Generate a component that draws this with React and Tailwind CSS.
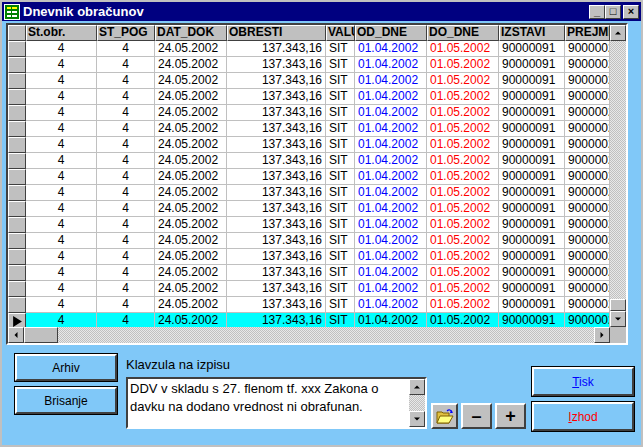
const cols = [
  { t: "Št.obr.", w: 71, a: "text-center" },
  { t: "ST_POG", w: 58, a: "text-center" },
  { t: "DAT_DOK", w: 72, a: "text-left" },
  { t: "OBRESTI", w: 99, a: "text-right" },
  { t: "VALU", w: 29, a: "text-left" },
  { t: "OD_DNE", w: 72, a: "text-left" },
  { t: "DO_DNE", w: 72, a: "text-left" },
  { t: "IZSTAVI", w: 66, a: "text-left" },
  { t: "PREJME", w: 45, a: "text-left" },
];
const vals = ["4", "4", "24.05.2002", "137.343,16", "SIT", "01.04.2002", "01.05.2002", "90000091", "9000002"];
const rows = Array.from({ length: 18 });

const raised = "border-t-white border-l-white border-r-[#404040] border-b-[#404040] border-2";

const Arrow = ({ d }) => {
  const pts = { up: "1,6 5,2 9,6", down: "1,2 5,6 9,2", left: "6,1 2,5 6,9", right: "2,1 6,5 2,9" }[d];
  const vb = d === "up" || d === "down" ? "0 0 10 8" : "0 0 8 10";
  return (
    <svg viewBox={vb} className={d === "up" || d === "down" ? "w-[8px] h-[6px]" : "w-[6px] h-[8px]"}>
      <polygon points={pts} fill="black" />
    </svg>
  );
};

const SBtn = ({ d }) => (
  <div className={`w-[16px] h-[16px] bg-[#c0c0c0] ${raised} border-[1px] flex items-center justify-center`}>
    <Arrow d={d} />
  </div>
);

const checker = "bg-[repeating-conic-gradient(#c0c0c0_0%_25%,#e8e8e8_0%_50%)] bg-[length:2px_2px]";

const Btn = ({ children, className }) => (
  <div className={`border border-black ${className}`}>
    <div className={`w-full h-full bg-[#80c8f8] ${raised} flex items-center justify-center text-[12px]`}>{children}</div>
  </div>
);

export default function App() {
  return (
    <div className="w-[643px] h-[447px] bg-[#c0c0c0] p-[2px] font-[Liberation_Sans,Arial,sans-serif] text-[12px] text-black overflow-hidden">
      <div className="w-full h-full bg-[#80c8f8] flex flex-col">
        <div className="h-[19px] bg-[#000080] flex items-center px-[2px] shrink-0">
          <svg viewBox="0 0 16 16" className="w-[16px] h-[16px]">
            <rect x="0" y="0" width="16" height="16" fill="#fff" />
            <rect x="1" y="1" width="14" height="14" fill="#008000" />
            <rect x="3" y="3" width="10" height="2" fill="#ffff00" />
            <rect x="3" y="7" width="10" height="2" fill="#fff" />
            <rect x="3" y="11" width="10" height="2" fill="#fff" />
            <rect x="7" y="3" width="1" height="10" fill="#008000" />
          </svg>
          <span className="text-white font-bold text-[13px] ml-[3px] flex-1">Dnevnik obračunov</span>
          {["_", "□", "×"].map((s, i) => (
            <div key={i} className={`w-[16px] h-[14px] bg-[#c0c0c0] ${raised} border-[1px] flex items-center justify-center text-[11px] font-bold leading-none ${i === 2 ? "ml-[2px]" : ""}`}>{s}</div>
          ))}
        </div>
        <div className="ml-[4px] mt-[2px] w-[622px] h-[322px] border-2 border-t-[#404040] border-l-[#404040] border-r-white border-b-white bg-[#c0c0c0] flex flex-col shrink-0">
          <div className="flex flex-1 overflow-hidden">
            <div className="flex-1 overflow-hidden">
              <div className="flex h-[16px] font-bold">
                <div className={`w-[20px] bg-[#c0c0c0] ${raised} border-[1px]`} />
                {cols.map((c, i) => (
                  <div key={i} style={{ width: c.w }} className={`bg-[#c0c0c0] ${raised} border-[1px] px-[1px] leading-[13px] whitespace-nowrap overflow-hidden shrink-0`}>{c.t}</div>
                ))}
              </div>
              {rows.map((_, r) => {
                const sel = r === 17;
                return (
                  <div key={r} className="flex h-[16px]">
                    <div className={`w-[20px] bg-[#c0c0c0] ${raised} border-[1px] flex items-center justify-center`}>
                      {sel && <svg viewBox="0 0 8 10" className="w-[9px] h-[11px]"><polygon points="0,0 8,5 0,10" fill="black" /></svg>}
                    </div>
                    {cols.map((c, i) => {
                      const color = sel ? "" : i === 5 ? "text-[#0000ff]" : i === 6 ? "text-[#ff0000]" : "";
                      return (
                        <div key={i} style={{ width: c.w }} className={`${sel ? "bg-[#00ffff]" : "bg-white"} border-r border-b border-[#c0c0c0] px-[3px] leading-[15px] whitespace-nowrap overflow-hidden shrink-0 ${c.a} ${color}`}>{vals[i]}</div>
                      );
                    })}
                  </div>
                );
              })}
            </div>
            <div className="w-[16px] flex flex-col shrink-0">
              <SBtn d="up" />
              <div className={`flex-1 ${checker} flex flex-col justify-end`}>
                <div className={`h-[12px] bg-[#c0c0c0] ${raised} border-[1px]`} />
              </div>
              <SBtn d="down" />
            </div>
          </div>
          <div className="h-[16px] flex shrink-0">
            <SBtn d="left" />
            <div className={`flex-1 ${checker} flex`}>
              <div className={`w-[34px] bg-[#c0c0c0] ${raised} border-[1px]`} />
            </div>
            <SBtn d="right" />
            <div className="w-[16px] bg-[#c0c0c0]" />
          </div>
        </div>
        <div className="flex mt-[6px] pl-[12px]">
          <div className="flex flex-col gap-[4px] mt-[2px]">
            <Btn className="w-[104px] h-[29px]">Arhiv</Btn>
            <Btn className="w-[104px] h-[29px]">Brisanje</Btn>
          </div>
          <div className="ml-[8px] flex flex-col">
            <div className="text-[13px] mt-[4px] h-[20px]">Klavzula na izpisu</div>
            <div className="flex items-end mt-[2px]">
              <div className="w-[301px] h-[52px] border-2 border-t-[#404040] border-l-[#404040] border-r-white border-b-white bg-white flex">
                <div className="flex-1 px-[2px] text-[13px] leading-[18px] pt-[1px]">DDV v skladu s 27. flenom tf. xxx Zakona o davku na dodano vrednost ni obrafunan.</div>
                <div className="w-[16px] flex flex-col">
                  <SBtn d="up" />
                  <div className={`flex-1 ${checker}`} />
                  <SBtn d="down" />
                </div>
              </div>
              <div className="flex gap-[3px] ml-[4px]">
                <div className={`w-[27px] h-[26px] bg-[#c0c0c0] ${raised} flex items-center justify-center`}>
                  <svg viewBox="0 0 18 16" className="w-[18px] h-[16px]">
                    <path d="M1 4h5l1 1h6v10H1z" fill="#e0c040" stroke="#806000" />
                    <path d="M1 15l3-7h13l-4 7z" fill="#ffff80" stroke="#806000" />
                    <path d="M11 3c2-2 4-1 5 1" stroke="#0000ff" fill="none" strokeWidth="1.2" />
                    <polygon points="15,2 17,5 14,5" fill="#0000ff" />
                  </svg>
                </div>
                <div className={`w-[31px] h-[26px] bg-[#c0c0c0] ${raised} flex items-center justify-center text-[18px] font-bold`}>–</div>
                <div className={`w-[31px] h-[26px] bg-[#c0c0c0] ${raised} flex items-center justify-center text-[18px] font-bold`}>+</div>
              </div>
            </div>
          </div>
          <div className="flex flex-col gap-[4px] ml-[5px] mt-[15px]">
            <Btn className="w-[104px] h-[31px]"><span className="text-[#0000ff]"><u>T</u>isk</span></Btn>
            <Btn className="w-[104px] h-[31px]"><span className="text-[#ff0000]"><u>I</u>zhod</span></Btn>
          </div>
        </div>
      </div>
    </div>
  );
}
